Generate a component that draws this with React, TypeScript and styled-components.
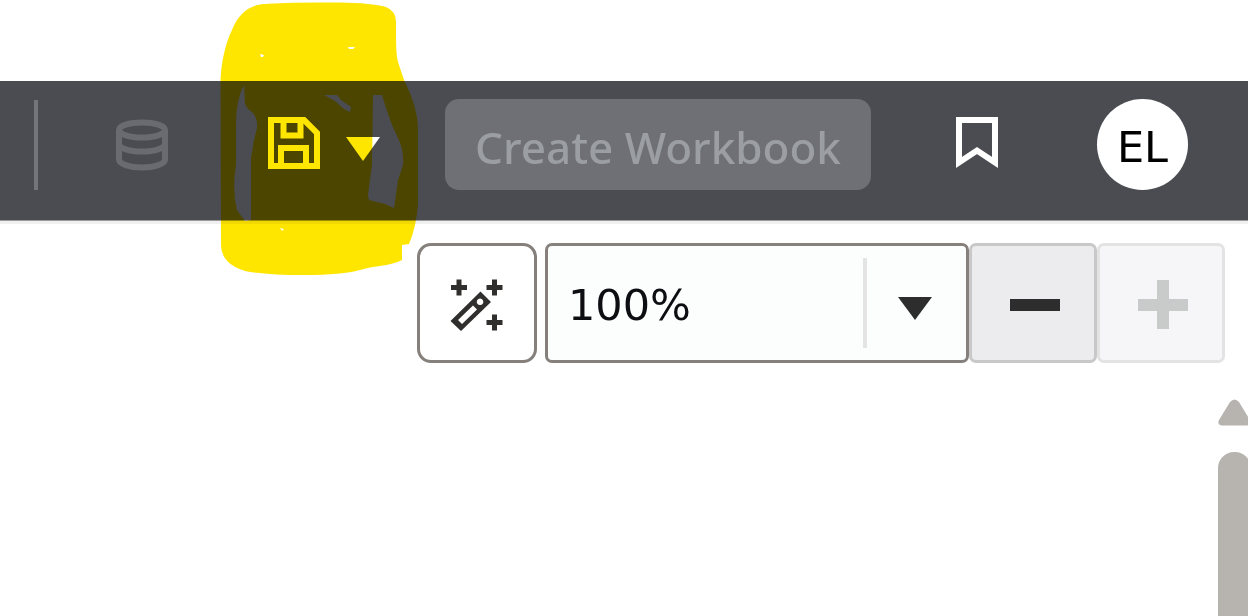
import React from "react";
import styled, { createGlobalStyle } from "styled-components";

const GlobalStyle = createGlobalStyle`
  * { box-sizing: border-box; }
  body { margin: 0; background: #fff; font-family: "Noto Sans", "Open Sans", sans-serif; }
  button, input { font: inherit; margin: 0; }
`;

const Page = styled.div`
  display: flex;
  flex-direction: column;
  min-height: 100vh;
  padding-top: 81px;
  overflow: hidden;
`;

const Header = styled.header`
  display: flex;
  justify-content: flex-end;
  align-items: center;
  height: 139px;
  padding: 18px 60px 30px 34px;
  background: #4b4c52;
  box-shadow: 0 1px 0 #9b9a9a, 0 4px 0 #f1f0f0;
`;

const Divider = styled.span`
  width: 4px;
  height: 90px;
  margin-right: 76px;
  background: #74757a;
`;

const IconButton = styled.button<{ $width?: number }>`
  display: flex;
  flex: none;
  width: ${(p) => p.$width ?? 56}px;
  height: 56px;
  padding: 0;
  border: 0;
  background: none;
`;

const SaveGroup = styled.div`
  position: relative;
  display: flex;
  gap: 23px;
  margin: 0 64px 0 96px;
`;

const Marker = styled.svg`
  position: absolute;
  left: -51px;
  top: -117px;
  width: 205px;
  height: 280px;
  z-index: 1;
  mix-blend-mode: multiply;
  pointer-events: none;
`;

const CreateButton = styled.button`
  flex: none;
  width: 426px;
  height: 91px;
  margin-right: 78px;
  padding: 4px 0 0;
  border: 0;
  border-radius: 14px;
  background: #6f7075;
  color: #9b9ea2;
  font-size: 44px;
  font-weight: 500;
  line-height: 60px;
  white-space: nowrap;
`;

const Avatar = styled.button`
  flex: none;
  width: 91px;
  height: 91px;
  margin-left: 92px;
  padding: 4px 0 0;
  border: 0;
  border-radius: 50%;
  background: #fff;
  color: #000;
  font-family: "DejaVu Sans", sans-serif;
  font-size: 43px;
`;

const ZoomBar = styled.div`
  display: flex;
  justify-content: flex-end;
  padding: 23px 23px 0;
`;

const WandButton = styled.button`
  display: grid;
  place-items: center;
  width: 120px;
  height: 120px;
  margin-right: 8px;
  padding: 0;
  border: 3px solid #85807b;
  border-radius: 14px;
  background: #fff;
`;

const Combo = styled.div`
  display: flex;
  align-items: center;
  width: 424px;
  height: 120px;
  border: 3px solid #85807b;
  border-radius: 7px;
  background: #fcfdfd;
`;

const ZoomInput = styled.input`
  flex: 1;
  min-width: 0;
  height: 90px;
  padding: 4px 20px 0;
  border: 0;
  border-right: 4px solid #e4e4e4;
  background: transparent;
  color: #0e0e12;
  font-family: "DejaVu Sans", sans-serif;
  font-size: 43px;
`;

const ComboToggle = styled.button`
  display: grid;
  place-items: center;
  width: 99px;
  height: 100%;
  padding: 4px 4px 0 0;
  border: 0;
  background: none;
`;

const StepButton = styled.button`
  display: grid;
  place-items: center;
  width: 128px;
  height: 120px;
  padding: 2px 0 0 4px;
  border: 3px solid #c8c8c8;
  border-radius: 7px;
  background: #ececee;
  color: #2d2d2d;
  &:disabled {
    border-color: #e3e3e3;
    background: #f6f6f8;
    color: #c9caca;
  }
`;

const ScrollRail = styled.div`
  display: flex;
  flex: 1;
  flex-direction: column;
  align-self: flex-end;
  width: 30px;
  margin-top: 36px;
  overflow: hidden;
`;

const ScrollUp = styled.button`
  display: block;
  flex: none;
  width: 33px;
  height: 27px;
  margin-bottom: 26px;
  padding: 0;
  border: 0;
  background: none;
`;

const ScrollThumb = styled.div`
  flex: 1;
  width: 33px;
  border-radius: 16px 16px 0 0;
  background: #b7b4b0;
`;

const DatabaseIcon = () => (
  <svg width="56" height="56" viewBox="0 0 56 56" fill="none" stroke="#6a6b70" strokeWidth="6">
    <ellipse cx="28" cy="13" rx="23" ry="7.500" />
    <path d="M5 13v29.500A23 8 0 0 0 51 42.500V13M5 27A23 7.500 0 0 0 51 27" />
  </svg>
);

const SaveIcon = () => (
  <svg width="56" height="56" viewBox="0 0 56 56" fill="none" stroke="#fff" strokeWidth="6">
    <path d="M5 3h33l13 13v33H5z" />
    <path d="M17.500 3v15.500h17V3M15 49V31h25v18" />
  </svg>
);

const MarkerHighlight = () => (
  <Marker viewBox="215 0 205 280" aria-hidden="true">
    <path
      fill="#ffe600"
      fillRule="evenodd"
      d="M220.500 81C221 64 225 44 232 30C238 14 249 5 264 4Q285 2 340 2.500Q372 3 386 7Q396 11 396 22L396 35Q396 55 398 62L404 80Q418 108 418 130L418 205Q416 228 409 244L402 245L402 260Q394 264 380 266Q370 267 360 270Q342 275 305 275Q265 275 245 271Q222 264 221 246Z
      M244 85L245 104Q248 110 252 112Q258 118 257 128L254 140L251 158L251 220L245 221L237 210Q232 190 236 165L236 125Q236 100 244 85Z
      M324 95L337 95L341 100L351 107L350 112L344 109L335 101Z
      M373 95L382 95L386 108L392 125L398 138Q404 150 403 165L398 180L394 208L385 204L369 200L368 195L372 165Z
      M260 54L264 55L263 57L261 57Z M348 47L355 47L353 49L349 49Z M280 228L284 229L282 231Z"
    />
  </Marker>
);

const WandIcon = () => (
  <svg width="56" height="56" viewBox="0 0 56 56" fill="#302f2d">
    <path
      fill="none"
      stroke="#302f2d"
      strokeWidth="5"
      d="M2 12.500h16M10 4.500v16M37.500 12.500h16M45.500 4.500v16M37.500 47.500h16M45.500 39.500v16"
    />
    <path
      fillRule="evenodd"
      d="M31.500 16.500L42 27L12 56L1.500 46ZM9 45L13 49L28 34.500L24 30.500ZM31 23.500a3.300 3.300 0 1 0 .1 0Z"
    />
  </svg>
);

export default function App() {
  return (
    <>
      <GlobalStyle />
      <Page>
        <Header>
          <Divider />
          <IconButton aria-label="Data" disabled>
            <DatabaseIcon />
          </IconButton>
          <SaveGroup>
            <IconButton aria-label="Save">
              <SaveIcon />
            </IconButton>
            <IconButton aria-label="Save options" $width={36}>
              <svg width="36" height="56" viewBox="0 0 36 56" fill="#fff">
                <path d="M1 20h34L18 44z" />
              </svg>
            </IconButton>
            <MarkerHighlight />
          </SaveGroup>
          <CreateButton disabled>Create Workbook</CreateButton>
          <IconButton aria-label="Bookmark">
            <svg width="56" height="56" viewBox="0 0 56 56" fill="none" stroke="#fff" strokeWidth="6">
              <path d="M10 3h36v42.500L28 33.500L10 45.500z" />
            </svg>
          </IconButton>
          <Avatar>EL</Avatar>
        </Header>
        <ZoomBar>
          <WandButton aria-label="Auto adjust">
            <WandIcon />
          </WandButton>
          <Combo>
            <ZoomInput aria-label="Zoom level" defaultValue="100%" />
            <ComboToggle aria-label="Zoom presets">
              <svg width="36" height="32" viewBox="0 0 36 32" fill="#2d2d2d">
                <path d="M1 8h34L18 31z" />
              </svg>
            </ComboToggle>
          </Combo>
          <StepButton aria-label="Zoom out">
            <svg width="50" height="50" viewBox="0 0 50 50" fill="currentColor">
              <path d="M0 20h50v12H0z" />
            </svg>
          </StepButton>
          <StepButton aria-label="Zoom in" disabled>
            <svg width="50" height="50" viewBox="0 0 50 50" fill="currentColor">
              <path d="M0 20h19V1h12v19h19v12H31v18H19V32H0z" />
            </svg>
          </StepButton>
        </ZoomBar>
        <ScrollRail>
          <ScrollUp aria-label="Scroll up">
            <svg width="33" height="27" viewBox="0 0 33 27" fill="#b7b4b0">
              <path d="M12 3Q16.500-2 21 3L32 21Q34 26 29 26.500H4Q-1 26 1 21Z" />
            </svg>
          </ScrollUp>
          <ScrollThumb />
        </ScrollRail>
      </Page>
    </>
  );
}
